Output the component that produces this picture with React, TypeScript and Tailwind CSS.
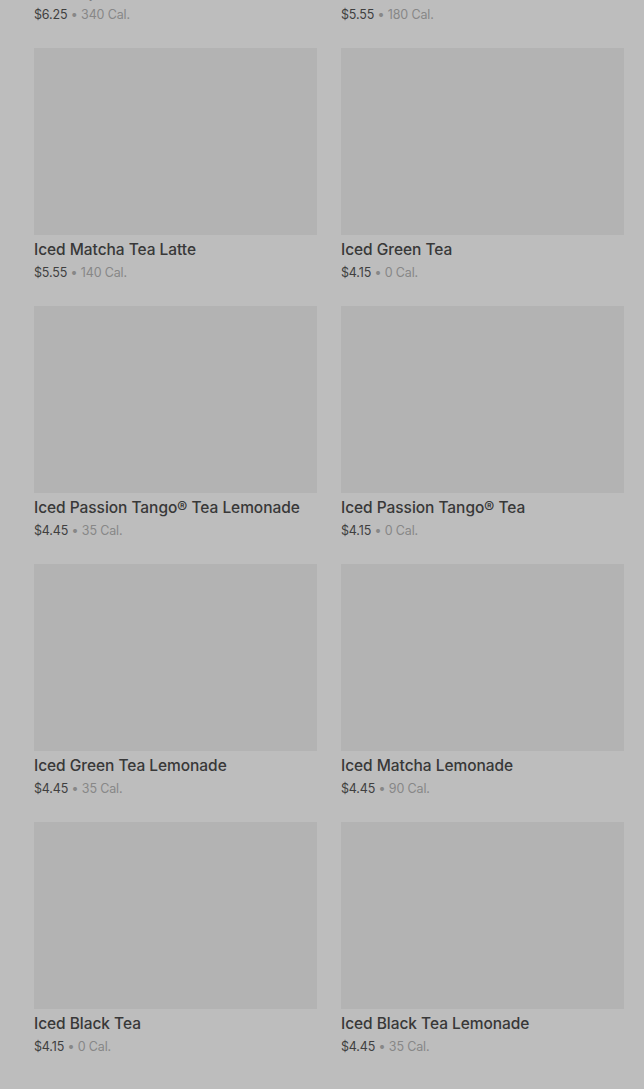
const items = [
  { name: "Iced Royal Tea", price: "$6.25", cal: "340 Cal." },
  { name: "Iced Chai Tea Latte", price: "$5.55", cal: "180 Cal." },
  { name: "Iced Matcha Tea Latte", price: "$5.55", cal: "140 Cal." },
  { name: "Iced Green Tea", price: "$4.15", cal: "0 Cal." },
  { name: "Iced Passion Tango® Tea Lemonade", price: "$4.45", cal: "35 Cal." },
  { name: "Iced Passion Tango® Tea", price: "$4.15", cal: "0 Cal." },
  { name: "Iced Green Tea Lemonade", price: "$4.45", cal: "35 Cal." },
  { name: "Iced Matcha Lemonade", price: "$4.45", cal: "90 Cal." },
  { name: "Iced Black Tea", price: "$4.15", cal: "0 Cal." },
  { name: "Iced Black Tea Lemonade", price: "$4.45", cal: "35 Cal." },
];

function Card({ name, price, cal }: { name: string; price: string; cal: string }) {
  return (
    <div className="flex flex-col">
      <div className="h-[187px] bg-[#b3b3b3]" />
      <div className="mt-[3px] text-[15.5px] leading-[24px] font-medium text-[#383838] tracking-[-0.05px]">
        {name}
      </div>
      <div className="mt-[1px] text-[12.5px] leading-[20px] text-[#3f3f3f] tracking-[-0.15px]">
        {price}
        <span className="text-[#878787]"> • {cal}</span>
      </div>
    </div>
  );
}

export default function App() {
  return (
    <div
      className="h-[1089px] overflow-hidden bg-[#bdbdbd]"
      style={{ fontFamily: "Inter, 'Noto Sans', sans-serif" }}
    >
      <div className="mt-[-210px] grid grid-cols-2 gap-x-6 gap-y-[23px] pl-[34px] pr-5">
        {items.map((it) => (
          <Card key={it.name} {...it} />
        ))}
      </div>
    </div>
  );
}
